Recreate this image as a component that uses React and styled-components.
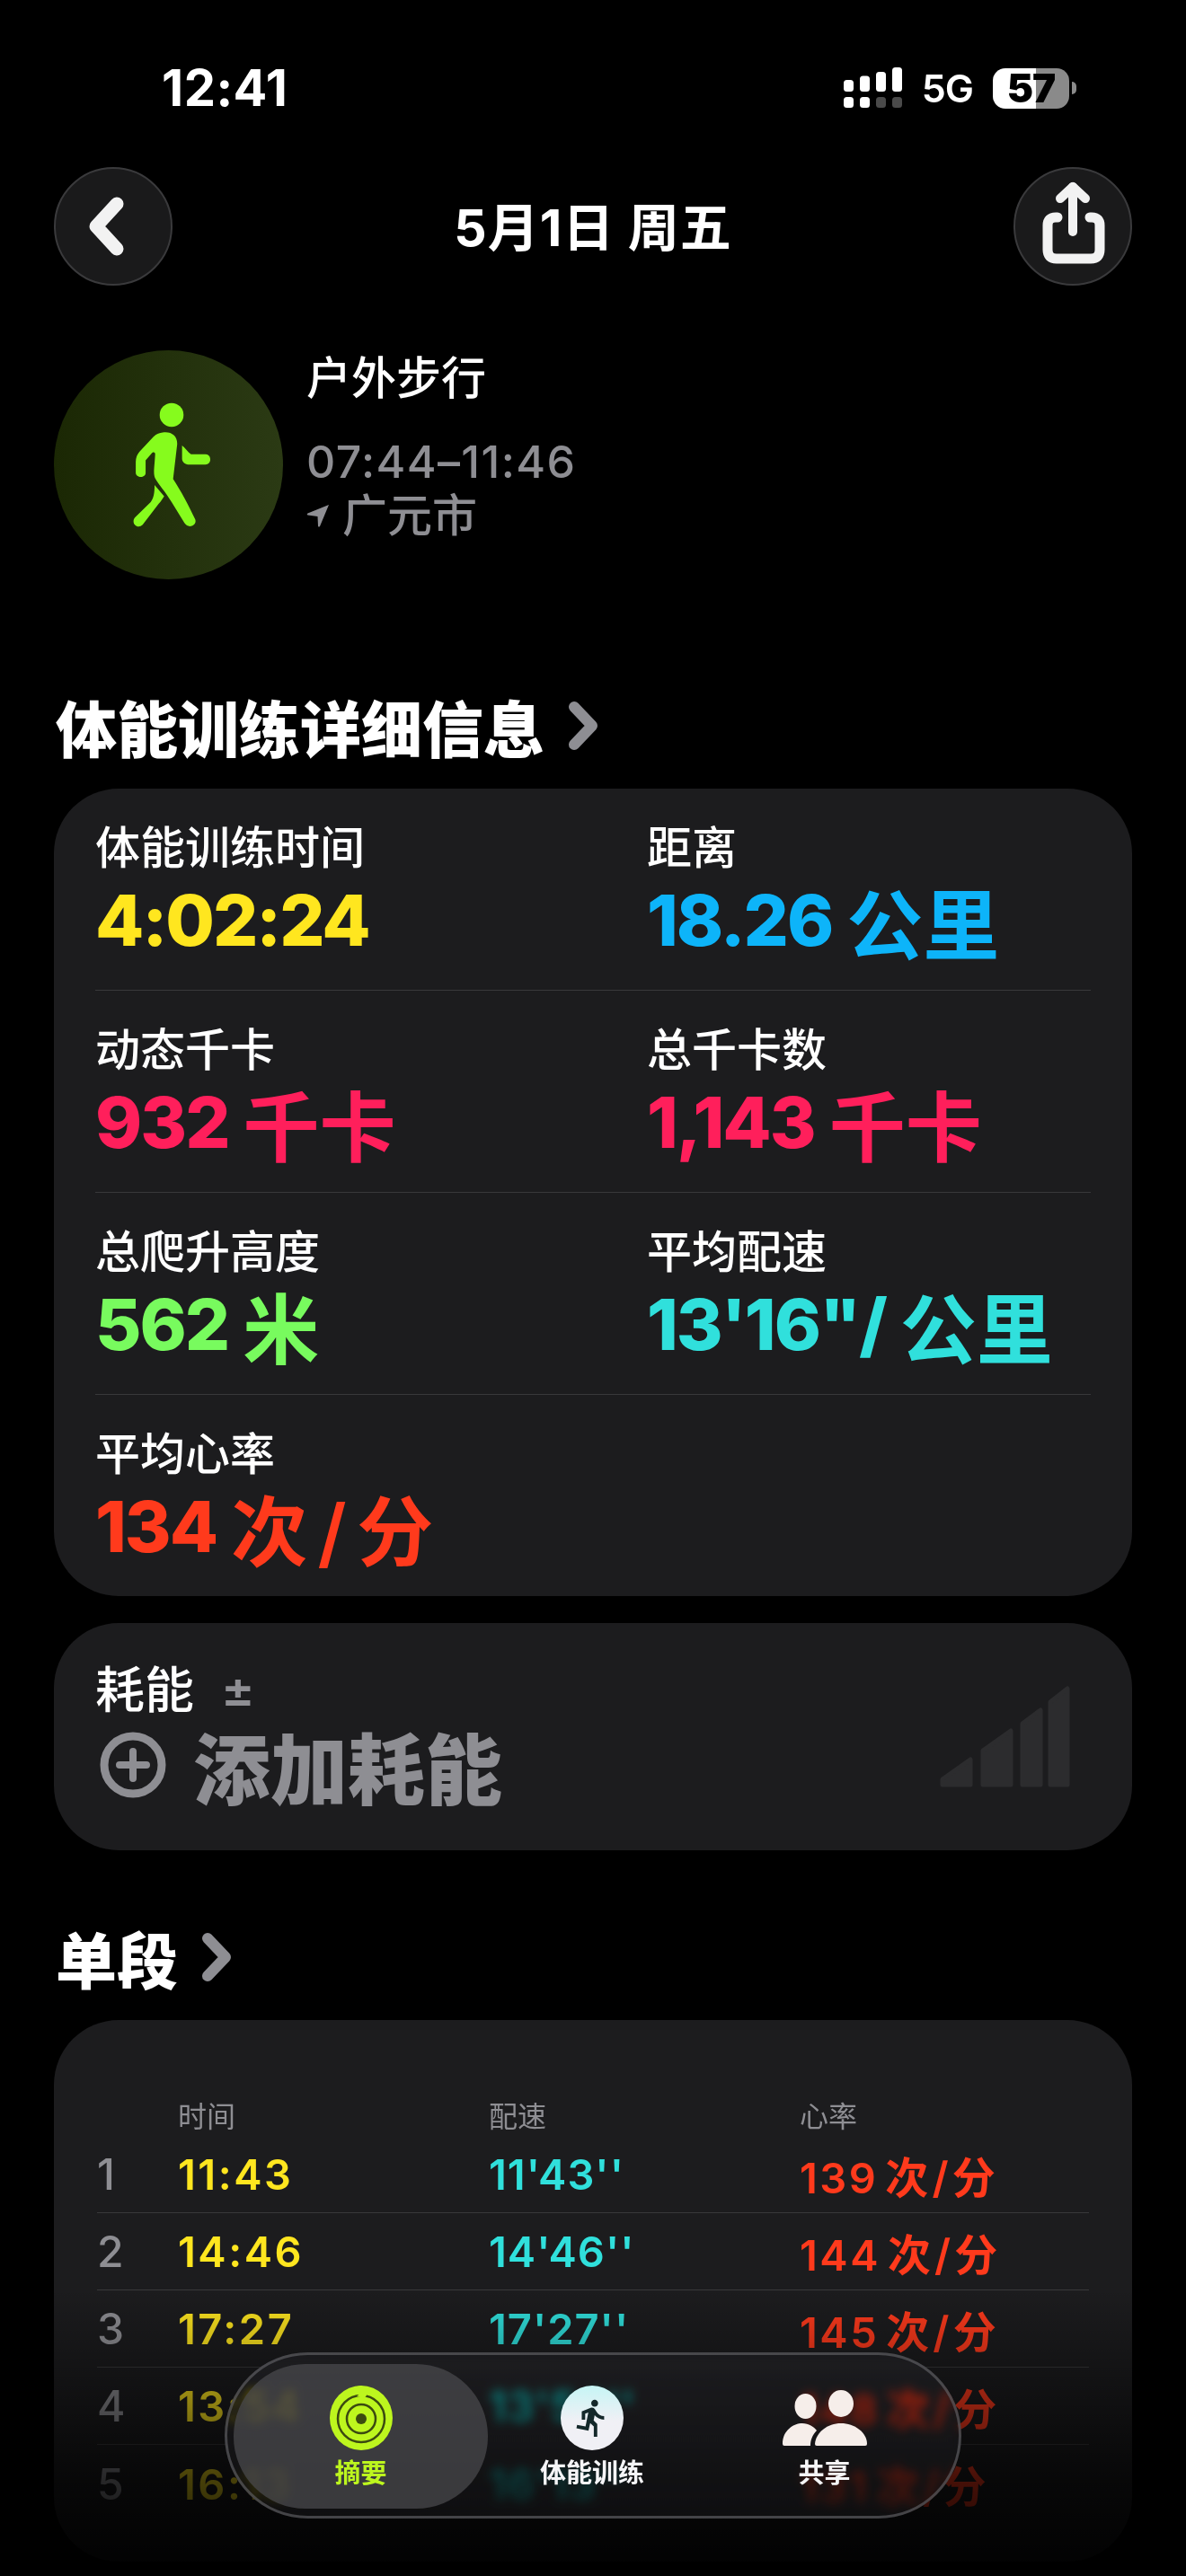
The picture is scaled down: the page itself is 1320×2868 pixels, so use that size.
import React from "react";
import styled, { createGlobalStyle } from "styled-components";
import { MdDirectionsRun } from "react-icons/md";

const GlobalStyle = createGlobalStyle`
  html, body {
    margin: 0;
    background: #000;
  }
  body {
    font-family: Inter, "Noto Sans CJK SC", sans-serif;
    color: #fff;
  }
`;

const colors = {
  yellow: "#ffe61f",
  blue: "#0db4f9",
  red: "#ff1f5b",
  green: "#78fb5e",
  teal: "#30e0dc",
  orange: "#ff3a1c",
  gray: "#8e8e93",
  card: "#1c1c1e",
};

const Page = styled.div`
  position: relative;
  width: 1320px;
  height: 2868px;
  overflow: hidden;
  box-sizing: border-box;
  padding: 0 60px;
  background: #000;
`;

const StatusBar = styled.div`
  display: flex;
  align-items: center;
  justify-content: space-between;
  height: 186px;
  padding: 10px 60px 0 120px;
  box-sizing: border-box;
`;

const Clock = styled.div`
  font-size: 56px;
  font-weight: 700;
  letter-spacing: 0.5px;
`;

const StatusIcons = styled.div`
  display: flex;
  align-items: center;
  margin-right: 2px;
`;

const FiveG = styled.div`
  font-size: 43px;
  font-weight: 600;
  margin: 0 22px 0 22px;
  letter-spacing: -1px;
`;

const Battery = styled.div`
  width: 85px;
  height: 45px;
  border-radius: 14px;
  background: linear-gradient(90deg, #fff 0 57%, #8a8a8a 57% 100%);
  color: #000;
  font-size: 44px;
  font-weight: 900;
  line-height: 45px;
  text-align: center;
  letter-spacing: -1px;
`;

const BatteryCap = styled.div`
  width: 5px;
  height: 14px;
  margin-left: 3px;
  border-radius: 0 5px 5px 0;
  background: #8a8a8a;
`;

const NavBar = styled.div`
  display: flex;
  align-items: center;
  justify-content: space-between;
`;

const RoundButton = styled.div`
  width: 132px;
  height: 132px;
  box-sizing: border-box;
  border-radius: 50%;
  background: #1a1a1b;
  border: 2px solid #3a3a3c;
  display: flex;
  align-items: center;
  justify-content: center;
  svg {
    display: block;
    flex: none;
  }
`;

const NavTitle = styled.div`
  padding-bottom: 6px;
  font-size: 57px;
  font-weight: 700;
  letter-spacing: 1px;
`;

const Hero = styled.div`
  display: flex;
  gap: 26px;
  margin-top: 72px;
`;

const ActivityCircle = styled.div`
  width: 255px;
  height: 255px;
  border-radius: 50%;
  background: linear-gradient(90deg, #1b2804, #2b3a14);
  display: flex;
  align-items: center;
  justify-content: center;
  svg {
    margin-left: 6px;
  }
`;

const HeroText = styled.div`
  display: flex;
  flex-direction: column;
  padding-top: 3px;
`;

const HeroTitle = styled.div`
  font-size: 50px;
  font-weight: 500;
  line-height: 56px;
`;

const HeroTime = styled.div`
  margin-top: 35px;
  font-size: 50px;
  font-weight: 500;
  line-height: 60px;
  color: ${colors.gray};
  letter-spacing: 1.4px;
`;

const HeroPlace = styled.div`
  display: flex;
  align-items: center;
  gap: 14px;
  font-size: 50px;
  font-weight: 500;
  line-height: 60px;
  color: ${colors.gray};
`;

const SectionTitle = styled.div`
  display: flex;
  align-items: center;
  gap: 26px;
  height: 80px;
  margin: ${(p) => p.$top}px 0 30px 2px;
  font-size: 68px;
  font-weight: 900;
`;

const Card = styled.div`
  position: relative;
  border-radius: 72px;
  background: ${colors.card};
`;

const StatsCard = styled(Card)`
  padding: 0 46px;
`;

const StatRow = styled.div`
  display: grid;
  grid-template-columns: 614px 1fr;
  padding: 36px 0;
  border-bottom: ${(p) => (p.$last ? "none" : "1px solid #38383a")};
`;

const Stat = styled.div`
  display: flex;
  flex-direction: column;
  gap: 8px;
`;

const StatLabel = styled.div`
  font-size: 50px;
  font-weight: 500;
  line-height: 60px;
`;

const StatValue = styled.div`
  display: flex;
  align-items: center;
  height: 84px;
  color: ${(p) => p.$color};
  font-size: 79px;
  font-weight: 800;
  letter-spacing: -2px;
  white-space: pre;
`;

const Unit = styled.span`
  margin-left: 16px;
  font-size: 85px;
  font-weight: 600;
  letter-spacing: 0;
  word-spacing: -10px;
`;

const EnergyCard = styled(Card)`
  display: flex;
  justify-content: space-between;
  align-items: flex-start;
  height: 253px;
  margin-top: 30px;
  padding: 44px 69px 0 46px;
  box-sizing: border-box;
`;

const EnergyLabel = styled.div`
  display: flex;
  align-items: center;
  gap: 30px;
  font-size: 55px;
  font-weight: 500;
  line-height: 60px;
`;

const PlusMinus = styled.span`
  color: ${colors.gray};
  font-size: 56px;
  font-weight: 600;
`;

const EnergyAdd = styled.div`
  display: flex;
  align-items: center;
  gap: 30px;
  height: 100px;
  margin: 4px 0 0 5px;
  color: ${colors.gray};
  font-size: 86px;
  font-weight: 900;
`;

const BarsIcon = styled.svg`
  margin-top: 26px;
`;

const LapsCard = styled(Card)`
  height: 603px;
  box-sizing: border-box;
  padding: 82px 48px 0;
`;

const LapGrid = styled.div`
  display: grid;
  grid-template-columns: 90px 346px 346px 1fr;
  align-items: center;
  height: ${(p) => p.$height}px;
  box-sizing: border-box;
  border-bottom: ${(p) => (p.$line ? "1px solid #38383a" : "none")};
`;

const LapHeader = styled(LapGrid)`
  margin-bottom: 7px;
`;

const LapHead = styled.div`
  grid-column: ${(p) => p.$col};
  color: ${colors.gray};
  font-size: 32px;
`;

const LapNum = styled.div`
  color: ${colors.gray};
  font-size: 48px;
  font-weight: 500;
`;

const LapVal = styled.div`
  color: ${(p) => p.$color};
  font-size: 47px;
  font-weight: 600;
  letter-spacing: ${(p) => p.$spacing}px;
  white-space: pre;
`;

const LapUnit = styled.span`
  margin-left: 8px;
  font-size: 48px;
  font-weight: 600;
  letter-spacing: 0;
  word-spacing: -8px;
`;

const BottomFade = styled.div`
  position: absolute;
  left: 0;
  right: 0;
  bottom: 0;
  height: 320px;
  background: linear-gradient(
    180deg,
    rgba(0, 0, 0, 0) 0%,
    rgba(0, 0, 0, 0.42) 38%,
    rgba(0, 0, 0, 0.72) 66%,
    rgba(0, 0, 0, 0.95) 100%
  );
  pointer-events: none;
`;

const TabBar = styled.div`
  position: absolute;
  left: 250px;
  bottom: 64px;
  width: 820px;
  height: 185px;
  box-sizing: border-box;
  padding: 10px 7px 8px;
  border-radius: 93px;
  border: 3px solid rgba(104, 104, 108, 0.6);
  background: rgba(24, 24, 26, 0.45);
  backdrop-filter: blur(6px) brightness(1.5) saturate(1.4);
  display: grid;
  grid-template-columns: 283px 232px 1fr;
`;

const Tab = styled.div`
  display: flex;
  flex-direction: column;
  align-items: center;
  padding-top: 24px;
  border-radius: 80px;
  background: ${(p) => (p.$active ? "rgba(74, 74, 76, 0.75)" : "transparent")};
  color: ${(p) => (p.$active ? "#bdf61e" : "#f5f5f7")};
`;

const TabIconBox = styled.div`
  height: 72px;
  display: flex;
  align-items: center;
  justify-content: center;
`;

const RunCircle = styled.div`
  width: 70px;
  height: 72px;
  border-radius: 50%;
  background: linear-gradient(180deg, #c6f5f5, #f0f0f5 55%);
  display: flex;
  align-items: center;
  justify-content: center;
  color: #14282a;
`;

const TabLabel = styled.div`
  margin-top: 6px;
  font-size: 29px;
  line-height: 40px;
  font-weight: 700;
`;

const SignalIcon = () => {
  const tops = [88, 83.5, 79, 74];
  const xs = [937, 955, 973, 991];
  return (
    <svg width="65" height="46" viewBox="937 74 65 46">
      {xs.map((x, i) => (
        <g key={x}>
          <rect x={x} y={tops[i]} width="11" height={101 - tops[i]} rx="3.5" fill="#fff" />
          <rect x={x} y="107" width="11" height="12" rx="3.5" fill={i < 2 ? "#fff" : "#4a4a4a"} />
        </g>
      ))}
    </svg>
  );
};

const BackIcon = () => (
  <svg width="132" height="132" viewBox="0 0 132 132" fill="none">
    <path d="M70 41 L47 66 L70 91" stroke="#f2f2f2" strokeWidth="15" strokeLinecap="round" strokeLinejoin="round" />
  </svg>
);

const ShareIcon = () => (
  <svg width="132" height="132" viewBox="0 0 132 132" fill="none" stroke="#f2f2f2" strokeLinecap="round" strokeLinejoin="round">
    <path d="M49 56 L47 56 Q38 56 38 65 L38 92 Q38 102 48 102 L86 102 Q96 102 96 92 L96 65 Q96 56 87 56 L85 56" strokeWidth="11" />
    <path d="M66 72 L66 22" strokeWidth="10" />
    <path d="M52 35 L66 22 L80 35" strokeWidth="10" />
  </svg>
);

const WalkIcon = () => (
  <svg width="90" height="143" viewBox="320 220 270 430" fill="#86fb1d">
    <circle cx="455" cy="268" r="40" />
    <path d="M425 327 C455 322 478 340 473 372 L460 482 C485 520 515 575 534 618 C541 636 512 652 498 630 L455 560 C435 525 410 500 400 480 C393 465 397 450 400 400 C400 392 392 390 387 398 L368 420 L368 462 C368 480 336 480 335 462 L335 425 C335 405 345 392 355 383 L395 340 C405 332 415 328 425 327 Z" />
    <path d="M490 370 C500 378 510 392 520 400 L568 400 C590 400 590 434 568 434 L510 434 C500 434 490 425 490 415 Z" />
    <path d="M398 503 L430 540 C425 548 420 556 412 565 L358 636 C340 652 318 630 332 612 L385 560 C395 548 398 530 398 503 Z" />
  </svg>
);

const LocationIcon = () => (
  <svg width="26" height="26" viewBox="0 0 26 26" fill={colors.gray}>
    <path d="M25 1 L15 25 C14 26 13 25.5 13 24.5 L12.5 14 L1.5 12.5 C0.5 12 0.5 11 1.5 10.5 Z" />
  </svg>
);

const Chevron = () => (
  <svg width="36" height="56" viewBox="0 0 36 56" fill="none">
    <path d="M7 7 L27 28 L7 49" stroke="#8e8e93" strokeWidth="12" strokeLinecap="round" strokeLinejoin="round" />
  </svg>
);

const AddIcon = () => (
  <svg width="74" height="74" viewBox="0 0 74 74" fill="none" stroke="#8e8e93">
    <circle cx="37" cy="37" r="32" strokeWidth="9" />
    <path d="M37 22 V52 M22 37 H52" strokeWidth="8" strokeLinecap="round" />
  </svg>
);

const EffortBars = () => (
  <BarsIcon width="145" height="113" viewBox="0 0 145 113" fill="#2c2c2e" stroke="#2c2c2e" strokeWidth="5" strokeLinejoin="round">
    <path d="M3 110 L3 104 L34 82 L34 110 Z" />
    <path d="M48 110 L48 72 L79 50 L79 110 Z" />
    <path d="M92 110 L92 42 L112 27 L112 110 Z" />
    <path d="M123 110 L123 18 L142 3 L142 110 Z" />
  </BarsIcon>
);

const RingsIcon = () => (
  <svg width="70" height="72" viewBox="0 0 70 72" fill="none">
    <ellipse cx="35" cy="36" rx="35" ry="36" fill="#bdf61e" />
    <circle cx="35" cy="37" r="26" stroke="#3b4a10" strokeWidth="2.5" />
    <circle cx="35" cy="37" r="16" stroke="#3b4a10" strokeWidth="2.5" />
    <circle cx="35" cy="37" r="6" fill="#3b4a10" />
    <path d="M35 0 C42 4 44 10 38 14 L30 12 C36 8 35 4 30 1 Z" fill="#bdf61e" />
  </svg>
);

const PeopleIcon = () => (
  <svg width="94" height="62" viewBox="0 0 94 62" fill="#f6eeea">
    <ellipse cx="25.5" cy="18" rx="12" ry="14" />
    <ellipse cx="65" cy="15" rx="14" ry="15" />
    <path d="M0 60 C0 45 12 37 22 37 C29 37 35 41 38 45 C33 50 31 56 31 62 L2 62 Q0 62 0 60 Z" />
    <path d="M36 60 C37 47 50 37 65 37 C80 37 94 47 94 60 Q94 62 92 62 L38 62 Q36 62 36 60 Z" />
  </svg>
);

const stats = [
  [
    { label: "体能训练时间", value: "4:02:24", color: colors.yellow },
    { label: "距离", value: "18.26", unit: "公里", color: colors.blue },
  ],
  [
    { label: "动态千卡", value: "932", unit: "千卡", color: colors.red },
    { label: "总千卡数", value: "1,143", unit: "千卡", color: colors.red },
  ],
  [
    { label: "总爬升高度", value: "562", unit: "米", color: colors.green },
    { label: "平均配速", value: "13'16\"/", unit: "公里", color: colors.teal },
  ],
  [{ label: "平均心率", value: "134", unit: "次 / 分", color: colors.orange }],
];

const laps = [
  ["1", "11:43", "11'43''", "139"],
  ["2", "14:46", "14'46''", "144"],
  ["3", "17:27", "17'27''", "145"],
  ["4", "13:54", "13'54''", "148"],
  ["5", "16:13", "16'13''", "131"],
];

export default function App() {
  return (
    <Page>
      <GlobalStyle />
      <StatusBar>
        <Clock>12:41</Clock>
        <StatusIcons>
          <SignalIcon />
          <FiveG>5G</FiveG>
          <Battery>57</Battery>
          <BatteryCap />
        </StatusIcons>
      </StatusBar>

      <NavBar>
        <RoundButton>
          <BackIcon />
        </RoundButton>
        <NavTitle>5月1日 周五</NavTitle>
        <RoundButton>
          <ShareIcon />
        </RoundButton>
      </NavBar>

      <Hero>
        <ActivityCircle>
          <WalkIcon />
        </ActivityCircle>
        <HeroText>
          <HeroTitle>户外步行</HeroTitle>
          <HeroTime>07:44–11:46</HeroTime>
          <HeroPlace>
            <LocationIcon />
            广元市
          </HeroPlace>
        </HeroText>
      </Hero>

      <SectionTitle $top={123}>
        体能训练详细信息
        <Chevron />
      </SectionTitle>

      <StatsCard>
        {stats.map((row, i) => (
          <StatRow key={i} $last={i === stats.length - 1}>
            {row.map((s) => (
              <Stat key={s.label}>
                <StatLabel>{s.label}</StatLabel>
                <StatValue $color={s.color}>
                  {s.value}
                  {s.unit && <Unit>{s.unit}</Unit>}
                </StatValue>
              </Stat>
            ))}
          </StatRow>
        ))}
      </StatsCard>

      <EnergyCard>
        <div>
          <EnergyLabel>
            耗能
            <PlusMinus>±</PlusMinus>
          </EnergyLabel>
          <EnergyAdd>
            <AddIcon />
            添加耗能
          </EnergyAdd>
        </div>
        <EffortBars />
      </EnergyCard>

      <SectionTitle $top={79}>
        单段
        <Chevron />
      </SectionTitle>

      <LapsCard>
        <LapHeader $height={40}>
          <LapHead $col={2}>时间</LapHead>
          <LapHead $col={3}>配速</LapHead>
          <LapHead $col={4}>心率</LapHead>
        </LapHeader>
        {laps.map(([n, time, pace, hr], i) => (
          <LapGrid key={n} $height={86} $line={i < laps.length - 1}>
            <LapNum>{n}</LapNum>
            <LapVal $color={colors.yellow} $spacing={2.5}>{time}</LapVal>
            <LapVal $color={colors.teal} $spacing={1}>{pace}</LapVal>
            <LapVal $color={colors.orange} $spacing={2.5}>
              {hr}
              <LapUnit>次 / 分</LapUnit>
            </LapVal>
          </LapGrid>
        ))}
      </LapsCard>

      <BottomFade />

      <TabBar>
        <Tab $active>
          <TabIconBox>
            <RingsIcon />
          </TabIconBox>
          <TabLabel>摘要</TabLabel>
        </Tab>
        <Tab>
          <TabIconBox>
            <RunCircle>
              <MdDirectionsRun size={46} />
            </RunCircle>
          </TabIconBox>
          <TabLabel>体能训练</TabLabel>
        </Tab>
        <Tab>
          <TabIconBox>
            <PeopleIcon />
          </TabIconBox>
          <TabLabel>共享</TabLabel>
        </Tab>
      </TabBar>
    </Page>
  );
}
